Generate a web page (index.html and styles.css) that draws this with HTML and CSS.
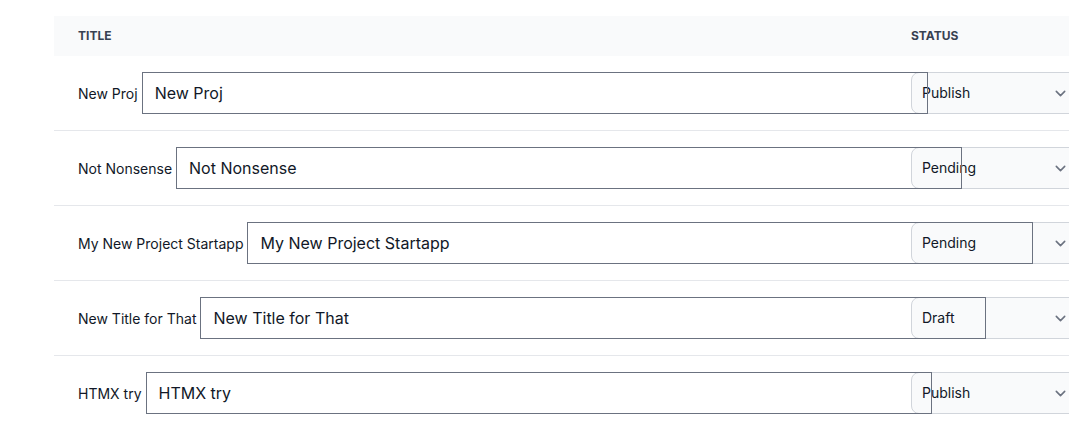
FILE: index.html
```html
<!DOCTYPE html>
<html>
<head>
<meta charset="utf-8">
<link rel="stylesheet" href="styles.css">
</head>
<body>
<div class="page">
  <table class="projects">
    <colgroup>
      <col class="col-title">
      <col class="col-status">
    </colgroup>
    <thead>
      <tr>
        <th>Title</th>
        <th>Status</th>
      </tr>
    </thead>
    <tbody>
      <tr>
        <td><div class="title-cell"><span class="title-label">New Proj</span><input class="title-input" type="text" value="New Proj"></div></td>
        <td><div class="select-wrap"><select class="status-select"><option selected>Publish</option><option>Pending</option><option>Draft</option></select><svg class="chev" viewBox="0 0 20 20"><path d="M6 8l4 4 4-4"/></svg></div></td>
      </tr>
      <tr>
        <td><div class="title-cell"><span class="title-label">Not Nonsense</span><input class="title-input" type="text" value="Not Nonsense"></div></td>
        <td><div class="select-wrap"><select class="status-select"><option>Publish</option><option selected>Pending</option><option>Draft</option></select><svg class="chev" viewBox="0 0 20 20"><path d="M6 8l4 4 4-4"/></svg></div></td>
      </tr>
      <tr>
        <td><div class="title-cell"><span class="title-label">My New Project Startapp</span><input class="title-input" type="text" value="My New Project Startapp"></div></td>
        <td><div class="select-wrap"><select class="status-select"><option>Publish</option><option selected>Pending</option><option>Draft</option></select><svg class="chev" viewBox="0 0 20 20"><path d="M6 8l4 4 4-4"/></svg></div></td>
      </tr>
      <tr>
        <td><div class="title-cell"><span class="title-label">New Title for That</span><input class="title-input" type="text" value="New Title for That"></div></td>
        <td><div class="select-wrap"><select class="status-select"><option>Publish</option><option>Pending</option><option selected>Draft</option></select><svg class="chev" viewBox="0 0 20 20"><path d="M6 8l4 4 4-4"/></svg></div></td>
      </tr>
      <tr>
        <td><div class="title-cell"><span class="title-label">HTMX try</span><input class="title-input" type="text" value="HTMX try"></div></td>
        <td><div class="select-wrap"><select class="status-select"><option selected>Publish</option><option>Pending</option><option>Draft</option></select><svg class="chev" viewBox="0 0 20 20"><path d="M6 8l4 4 4-4"/></svg></div></td>
      </tr>
    </tbody>
  </table>
</div>
</body>
</html>
```
FILE: styles.css
```css
html, body {
  margin: 0;
  padding: 0;
  background: #ffffff;
  overflow: hidden;
  font-family: Inter, "Liberation Sans", sans-serif;
  color: #111827;
}

.page {
  padding: 16px 0 0 54px;
  width: 1200px;
}

.projects {
  border-collapse: collapse;
  table-layout: fixed;
  width: 1048px;
  text-align: left;
}

.col-title { width: 833px; }
.col-status { width: 215px; }

.projects thead th {
  background: #f9fafb;
  padding: 12px 24px;
  font-size: 12px;
  line-height: 16px;
  font-weight: 700;
  text-transform: uppercase;
  color: #374151;
  letter-spacing: 0;
}

.projects tbody td {
  padding: 16px 24px;
  border-bottom: 1px solid #e5e7eb;
  vertical-align: middle;
}

.projects tbody tr:last-child td {
  border-bottom: none;
}

.title-cell {
  display: flex;
  align-items: center;
  gap: 4px;
  white-space: nowrap;
  font-size: 14px;
  line-height: 20px;
  color: #111827;
}

.title-label {
  flex: none;
  padding-top: 1px;
}

.title-input {
  flex: none;
  position: relative;
  z-index: 2;
  box-sizing: border-box;
  width: 786px;
  height: 42px;
  border: 1px solid #6b7280;
  border-radius: 0;
  background: transparent;
  padding: 8px 12px;
  font-family: Inter, "Liberation Sans", sans-serif;
  font-size: 16px;
  line-height: 24px;
  font-weight: 400;
  color: #111827;
  outline: none;
  margin: 0;
}

.select-wrap {
  position: relative;
  width: 168px;
}

.status-select {
  appearance: none;
  -webkit-appearance: none;
  box-sizing: border-box;
  width: 100%;
  height: 42px;
  padding: 10px 40px 10px 10px;
  background: #f9fafb;
  border: 1px solid #d1d5db;
  border-radius: 8px;
  font-family: Inter, "Liberation Sans", sans-serif;
  font-size: 14px;
  line-height: 20px;
  color: #111827;
  margin: 0;
}

.chev {
  position: absolute;
  right: 8px;
  top: 10.5px;
  width: 21px;
  height: 21px;
  fill: none;
  stroke: #6b7280;
  stroke-width: 1.5;
  stroke-linecap: round;
  stroke-linejoin: round;
  pointer-events: none;
}
```
